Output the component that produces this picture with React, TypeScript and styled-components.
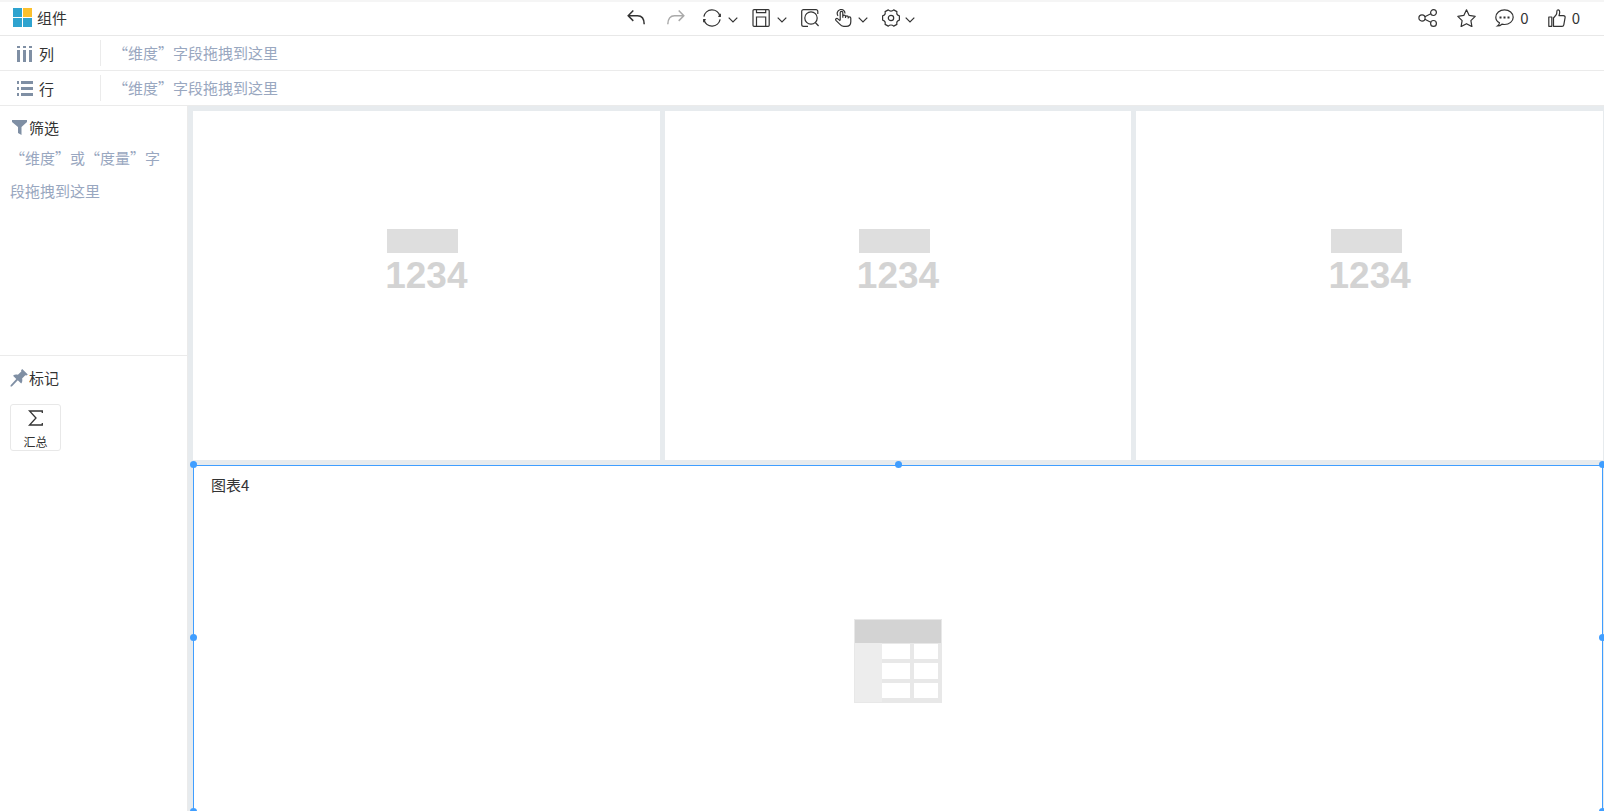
import React from 'react';
import styled, { createGlobalStyle, css } from 'styled-components';

const GlobalStyle = createGlobalStyle`
  *, *::before, *::after { box-sizing: border-box; }
  html, body, #root { height: 100%; }
  body {
    margin: 0;
    overflow: hidden;
    background: #fff;
    color: #333;
    font-family: "Noto Sans CJK SC", sans-serif;
    font-size: 15px;
    line-height: 20px;
  }
`;

const Page = styled.div`
  display: flex;
  flex-direction: column;
  height: 100vh;
  border-top: 2px solid #f5f5f5;
`;

const Header = styled.header`
  display: grid;
  grid-template-columns: 1fr auto 1fr;
  align-items: center;
  flex: none;
  height: 34px;
  padding: 0 24px 2px 13px;
  border-bottom: 1px solid #e8e8e8;
`;

const Brand = styled.h1`
  display: flex;
  align-items: center;
  gap: 5px;
  margin: 0;
  font-size: 15px;
  font-weight: 400;
`;

const Toolbar = styled.div`
  display: flex;
  align-items: center;
  gap: 14px;
  margin-right: 51px;
`;

const HistoryGroup = styled.div`
  display: flex;
  align-items: center;
  gap: 22px;
  margin-right: 4px;
`;

const Actions = styled.div`
  display: flex;
  align-items: center;
  justify-content: flex-end;
  gap: 19px;
`;

const IconButton = styled.button<{ $gap?: number }>`
  display: flex;
  align-items: center;
  gap: ${({ $gap = 6 }) => $gap}px;
  padding: 0;
  border: 0;
  background: none;
  color: #333;
  font: inherit;
  cursor: pointer;

  &:disabled { color: #aaa; cursor: default; }
  svg { display: block; }
`;

const Line = styled.svg`
  fill: none;
  stroke: currentColor;
  stroke-width: 1.2;
`;

const Shelf = styled.section`
  display: flex;
  align-items: center;
  flex: none;
  height: 35px;
  border-bottom: 1px solid #ebebeb;
`;

const ShelfName = styled.h2`
  display: flex;
  align-items: center;
  gap: 6px;
  width: 101px;
  height: 26px;
  margin: 0;
  padding: 2px 0 0 17px;
  border-right: 1px solid #ebebeb;
  font-size: 15px;
  font-weight: 400;
`;

const Hint = styled.p<{ $block?: boolean }>`
  margin: 0;
  color: #99a7c0;
  ${({ $block }) => $block
    ? css`padding: 3px 6px 0 0; line-height: 33px;`
    : css`padding-left: 12px;`}
`;

const Body = styled.div`
  display: flex;
  flex: 1;
  min-height: 0;
`;

const Sidebar = styled.aside`
  display: flex;
  flex-direction: column;
  flex: none;
  width: 188px;
  border-right: 1px solid #ebebeb;
`;

const Panel = styled.section<{ $fill?: boolean }>`
  padding: 12px 10px;
  ${({ $fill }) => $fill
    ? css`flex: 1;`
    : css`height: 250px; border-bottom: 1px solid #ebebeb;`}
`;

const PanelTitle = styled.h2`
  display: flex;
  align-items: center;
  gap: 1px;
  margin: 0;
  font-size: 15px;
  font-weight: 400;
`;

const MarkButton = styled.button`
  display: flex;
  flex-direction: column;
  align-items: center;
  justify-content: space-between;
  width: 51px;
  height: 47px;
  margin-top: 16px;
  padding: 5px 0 0;
  border: 1px solid #e8e8e8;
  border-radius: 3px;
  background: #fff;
  color: #333;
  font: inherit;
  font-size: 12px;
  line-height: 16px;
`;

const Canvas = styled.main`
  display: grid;
  grid-template-columns: repeat(3, 1fr);
  grid-auto-rows: 349px;
  gap: 5px;
  flex: 1;
  min-width: 0;
  padding: 5px 1px 0 5px;
  background: #e7ebee;
`;

const MetricCard = styled.article`
  display: flex;
  flex-direction: column;
  align-items: center;
  justify-content: center;
  padding-bottom: 44px;
  background: #fff;
`;

const Metric = styled.div`
  color: #d3d3d3;
  font: bold 37px/46px "Liberation Sans", sans-serif;
`;

const MetricBar = styled.div`
  width: 71px;
  height: 24px;
  margin-left: 2px;
  background: #dedede;
`;

const TableCard = styled.article`
  position: relative;
  grid-column: 1 / -1;
  display: flex;
  flex-direction: column;
  border: 1px solid #409eff;
  background: #fff;
`;

const CardTitle = styled.h2`
  margin: 0;
  padding: 9px 17px;
  font-size: 15px;
  font-weight: 400;
`;

const CardContent = styled.div`
  display: flex;
  flex: 1;
  align-items: center;
  justify-content: center;
  padding-top: 4px;
`;

const Handle = styled.span<{ $x: number; $y: number }>`
  position: absolute;
  left: ${({ $x }) => $x}%;
  top: ${({ $y }) => $y}%;
  width: 7px;
  height: 7px;
  margin: ${({ $y }) => ($y === 50 ? -6 : -5)}px 0 0 ${({ $x }) => ($x === 0 ? -4 : -3)}px;
  border-radius: 50%;
  background: #409eff;
`;

const Logo = () => (
  <svg width="19" height="19" viewBox="0 0 19 19" aria-hidden="true">
    <path fill="#2ea3cf" d="M0 0h9v9H0zM0 10h9v9H0zM10 10h9v9h-9z" />
    <path fill="#fbc02d" d="M10 0h9v9h-9z" />
  </svg>
);

const Chevron = () => (
  <Line width="10" height="18" viewBox="0 0 10 18" aria-hidden="true"><path d="m.7 8.700 4.300 4.300 4.300-4.300" /></Line>
);

const Undo = () => (
  <Line width="18" height="18" viewBox="0 0 18 18" aria-hidden="true">
    <path strokeWidth="1.5" d="M6.300 1.500 1.200 6.700 6.300 11.900M1.200 6.700h9.300c4 0 6.700 3 6.700 8.600" />
  </Line>
);

const Redo = () => (
  <Line width="18" height="18" viewBox="0 0 18 18" aria-hidden="true">
    <path strokeWidth="1.5" d="M11.700 1.500 16.800 6.700 11.700 11.900M16.800 6.700H7.500C3.500 6.700.8 9.700.8 15.300" />
  </Line>
);

const Refresh = () => (
  <Line width="18" height="18" viewBox="0 0 18 18" aria-hidden="true">
    <path strokeWidth="1.300" d="M.9 7.600a8.200 8.200 0 0 1 16-.6M17.100 10.400a8.200 8.200 0 0 1-16 .6" />
    <path d="M17.300 4.800v2.600h-2M.7 13.200v-2.600h2" />
  </Line>
);

const Save = () => (
  <Line width="18" height="18" viewBox="0 0 18 18" aria-hidden="true">
    <rect x="1" y=".7" width="16.200" height="16.600" rx="1" />
    <path d="M4.500 1v2.600h9.200V1M4.500 17.300V8h9.200v9.300" />
  </Line>
);

const Inspect = () => (
  <Line width="18" height="18" viewBox="0 0 18 18" aria-hidden="true">
    <path d="M16.800 5V2.500C16.800 1.300 16 .7 15 .7H2.600C1.400.7.7 1.400.7 2.600v12.800c0 1.200.7 1.900 1.900 1.900H7" />
    <circle cx="10" cy="9" r="6.200" /><path d="m14.300 13.500 3.300 3.500" />
  </Line>
);

const Hand = () => (
  <Line width="20" height="18" viewBox="-2 0 20 18" strokeLinejoin="round" aria-hidden="true">
    <path d="M5.200 11.300V3.600c0-1.600 2.600-1.600 2.600 0v5M7.800 8.700V7.300c0-1.500 2.700-1.500 2.700 0v1.700M10.500 8c0-1.500 2.700-1.500 2.700 0v1.500M13.200 9c0-1.500 2.600-1.400 2.600.2v3.500c0 3-1.700 4.700-4.700 4.700H8.700c-1.800 0-2.800-.7-4-2.200L.9 11.400c-1-1.400.8-2.600 2-1.500l2.300 2M3 6.800A3.900 3.900 0 1 1 10 4.600" />
  </Line>
);

const Gear = () => (
  <Line width="18" height="18" viewBox="0 0 18 18" strokeLinejoin="round" aria-hidden="true">
    <path d="M6.300.9c1.400 1.500 4 1.500 5.400 0l3.200 1.700c-.5 2 .5 3.700 2.500 4.300v4.200c-2 .6-3 2.300-2.500 4.300l-3.200 1.700c-1.400-1.500-4-1.500-5.400 0l-3.200-1.700c.5-2-.5-3.700-2.500-4.300V6.900c2-.6 3-2.300 2.500-4.300z" />
    <circle cx="9" cy="9" r="2.700" />
  </Line>
);

const Share = () => (
  <Line width="20" height="18" viewBox="0 0 20 18" aria-hidden="true">
    <circle cx="4" cy="9" r="3.100" /><circle cx="15.500" cy="3.600" r="2.900" /><circle cx="15.500" cy="14.400" r="2.900" />
    <path d="m6.800 7.700 6-2.900M6.800 10.300l6 2.900" />
  </Line>
);

const Star = () => (
  <Line width="19" height="18" viewBox="0 0 19 18" strokeLinejoin="round" aria-hidden="true">
    <path d="m9.500.8 2.700 5.600 6 .9-4.300 4.300 1 6-5.400-2.900-5.400 2.900 1-6L.8 7.300l6-.9z" />
  </Line>
);

const Comment = () => (
  <Line width="19" height="18" viewBox="0 0 19 18" aria-hidden="true">
    <path d="M4.500 13.800C2.200 12.600.8 10.500.8 8.200.8 4.100 4.700.8 9.500.8s8.700 3.300 8.700 7.400-3.900 7.300-8.700 7.300c-.9 0-1.800-.1-2.600-.3-1.200 1.100-2.600 1.700-4.400 1.700 1.200-.8 1.900-1.800 2-3.100z" />
    <path fill="currentColor" stroke="none" d="M4.500 7.500h2v2h-2zM8.500 7.500h2v2h-2zM12.500 7.500h2v2h-2z" />
  </Line>
);

const Like = () => (
  <Line width="18" height="18" viewBox="0 0 18 18" strokeLinejoin="round" aria-hidden="true">
    <path d="M.8 8h3v9.300h-3zM5.500 17.300V9l2.600-3.200c.8-1 .8-2.300.8-3.600 0-2 2.800-1.900 2.800.7 0 1.600-.4 2.700-.7 3.800h4.400c1.300 0 1.900.8 1.700 1.900l-1.300 7.200c-.2 1-.7 1.500-1.700 1.500z" />
  </Line>
);

const ColumnsIcon = () => (
  <svg width="16" height="16" viewBox="0 0 16 16" fill="#7f8fa4" aria-hidden="true">
    <path d="M0 0h3v2H0zM0 4h3v12H0zM6 0h3v2H6zM6 4h3v12H6zM12 0h3v2h-3zM12 4h3v12h-3z" />
  </svg>
);

const RowsIcon = () => (
  <svg width="16" height="16" viewBox="0 0 16 16" fill="#7f8fa4" aria-hidden="true">
    <path d="M0 0h2v3H0zM4 0h12v3H4zM0 6h2v3H0zM4 6h12v3H4zM0 12h2v3H0zM4 12h12v3H4z" />
  </svg>
);

const FilterIcon = () => (
  <svg width="18" height="16" viewBox="0 0 18 16" fill="#7f8fa4" aria-hidden="true">
    <path d="M2 0h15v2l-5.500 5v8l-3.500-2V7L2 2z" />
  </svg>
);

const PinIcon = () => (
  <svg width="18" height="18" viewBox="0 0 18 18" fill="#7f8fa4" aria-hidden="true">
    <path d="m12.200 0 5.600 5.500-1.400 1-1.100-.2-3.200 3.300c.5 2 .2 3.700-.9 5l-3.400-3.400L1.800 17.500.5 17.400l.1-1.200 5.700-6.100L3 6.800c1.400-1.200 3-1.500 4.900-1L11.300 2.500l-.2-1.300z" />
  </svg>
);

const SigmaIcon = () => (
  <Line width="16" height="16" viewBox="0 0 16 16" aria-hidden="true">
    <path strokeWidth="1.300" d="M14.300 3V1H1.500L8 8l-6.500 7h12.800v-2" />
  </Line>
);

const TableIcon = () => (
  <svg width="88" height="84" viewBox="0 0 88 84" role="img" aria-label="表格">
    <path fill="#e8e8e8" d="M0 0h88v84H0z" />
    <path fill="#d3d3d3" d="M1 1h86v23H1z" />
    <path fill="#ededed" d="M1 24h27v59H1z" />
    <path fill="#fff" d="M28 25h28v15H28zM60 25h24v15H60zM28 44h28v16H28zM60 44h24v16H60zM28 64h28v15H28zM60 64h24v15H60z" />
  </svg>
);

const handles = [[0, 0], [50, 0], [100, 0], [0, 50], [100, 50], [0, 100], [100, 100]];

export default function App() {
  return (
    <>
      <GlobalStyle />
      <Page>
        <Header>
          <Brand><Logo />组件</Brand>
          <Toolbar role="toolbar" aria-label="工具栏">
            <HistoryGroup>
              <IconButton aria-label="撤销"><Undo /></IconButton>
              <IconButton aria-label="重做" disabled><Redo /></IconButton>
            </HistoryGroup>
            <IconButton $gap={7} aria-label="刷新"><Refresh /><Chevron /></IconButton>
            <IconButton $gap={7} aria-label="保存"><Save /><Chevron /></IconButton>
            <IconButton aria-label="预览"><Inspect /></IconButton>
            <IconButton $gap={5} aria-label="交互"><Hand /><Chevron /></IconButton>
            <IconButton $gap={5} aria-label="设置"><Gear /><Chevron /></IconButton>
          </Toolbar>
          <Actions>
            <IconButton aria-label="分享"><Share /></IconButton>
            <IconButton aria-label="收藏"><Star /></IconButton>
            <IconButton aria-label="评论"><Comment />0</IconButton>
            <IconButton aria-label="点赞"><Like />0</IconButton>
          </Actions>
        </Header>
        <Shelf>
          <ShelfName><ColumnsIcon />列</ShelfName>
          <Hint>“维度”字段拖拽到这里</Hint>
        </Shelf>
        <Shelf>
          <ShelfName><RowsIcon />行</ShelfName>
          <Hint>“维度”字段拖拽到这里</Hint>
        </Shelf>
        <Body>
          <Sidebar>
            <Panel>
              <PanelTitle><FilterIcon />筛选</PanelTitle>
              <Hint $block>“维度”或“度量”字段拖拽到这里</Hint>
            </Panel>
            <Panel $fill>
              <PanelTitle><PinIcon />标记</PanelTitle>
              <MarkButton><SigmaIcon />汇总</MarkButton>
            </Panel>
          </Sidebar>
          <Canvas>
            {[1, 2, 3].map((n) => (
              <MetricCard key={n}>
                <Metric><MetricBar />1234</Metric>
              </MetricCard>
            ))}
            <TableCard>
              <CardTitle>图表4</CardTitle>
              <CardContent><TableIcon /></CardContent>
              {handles.map(([x, y]) => <Handle key={`${x}-${y}`} $x={x} $y={y} />)}
            </TableCard>
          </Canvas>
        </Body>
      </Page>
    </>
  );
}
